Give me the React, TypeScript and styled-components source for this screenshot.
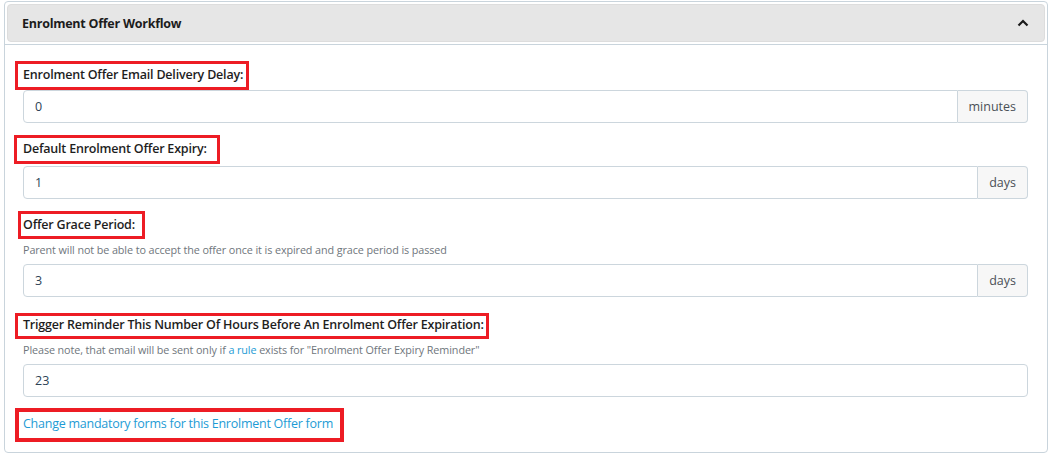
import styled, { createGlobalStyle } from 'styled-components'
import { FunctionComponent, ReactElement, ReactNode } from 'react'

const GlobalStyle = createGlobalStyle`
    body {
        margin: 0;
        background: #ffffff;
        font-family: 'Open Sans', 'Noto Sans', 'Liberation Sans', sans-serif;
        color: #212529;
    }
`

const Card = styled.section`
    width: 1042px;
    margin: 1px 0 0 4px;
    border: 1px solid #c9d4dc;
    border-radius: 4px;
`

const CardHead = styled.div`
    padding: 2px;
    border-bottom: 1px solid #c9d4dc;
`

const HeadBar = styled.div`
    height: 36px;
    display: flex;
    align-items: center;
    justify-content: space-between;
    padding: 0 15px 0 14px;
    background: #e6e6e6;
    border: 1px solid #dddddd;
    border-radius: 4px;
`

const Title = styled.h2`
    margin: 0;
    font-size: 12.5px;
    font-weight: 700;
    letter-spacing: -0.25px;
    color: #1c1c1c;
`

const Body = styled.div`
    display: flex;
    flex-direction: column;
    align-items: flex-start;
    padding: 16px 19px 10px 18px;
`

type HighlightProps = {
    $pad: string
    $shift: number
    $gap: number
    $width?: number
}

const Highlight = styled.div<HighlightProps>`
    display: inline-block;
    border: ${(p) => p.$width ?? 3}px solid #ed1c24;
    padding: ${(p) => p.$pad};
    margin-left: ${(p) => p.$shift}px;
    margin-bottom: ${(p) => p.$gap}px;
    font-size: 12.5px;
    line-height: 18px;
    font-weight: 600;
    letter-spacing: -0.2px;
    color: #1e1e1e;
`

const Help = styled.p`
    margin: 4px 0 7px 0;
    font-size: 10.8px;
    line-height: 14px;
    letter-spacing: -0.1px;
    color: #6f767c;
`

const Link = styled.a`
    color: #1d9bd5;
    text-decoration: none;
    cursor: pointer;
`

const FieldLink = styled(Link)`
    font-size: 12.5px;
    font-weight: 400;
    letter-spacing: -0.25px;
`

const InputGroup = styled.div<{ $gap: number }>`
    align-self: stretch;
    display: flex;
    height: 33px;
    margin-bottom: ${(p) => p.$gap}px;
`

const Input = styled.input<{ $joined: boolean }>`
    flex: 1;
    min-width: 0;
    box-sizing: border-box;
    height: 33px;
    padding: 0 11px;
    border: 1px solid #ccd6dd;
    border-radius: ${(p) => (p.$joined ? '4px 0 0 4px' : '4px')};
    font-family: inherit;
    font-size: 12.5px;
    color: #2d4255;
    background: #ffffff;
    outline: none;
`

const Addon = styled.span`
    display: flex;
    align-items: center;
    padding: 0 11px;
    border: 1px solid #ccd6dd;
    border-left: none;
    border-radius: 0 4px 4px 0;
    background: #f7f7f7;
    font-size: 12.5px;
    color: #4a5056;
`

const Chevron = () => (
    <svg width="12" height="8" viewBox="0 0 12 8">
        <polyline
            points="1.5,6.5 6,2 10.5,6.5"
            fill="none"
            stroke="#1a1a1a"
            strokeWidth="2.2"
        />
    </svg>
)

type FieldProps = {
    label: string
    pad: string
    shift: number
    labelGap: number
    help?: ReactNode
    value: string
    unit?: string
    gap: number
}

const Field: FunctionComponent<FieldProps> = ({
    label,
    pad,
    shift,
    labelGap,
    help,
    value,
    unit,
    gap,
}): ReactElement => (
    <>
        <Highlight $pad={pad} $shift={shift} $gap={help ? 0 : labelGap}>
            {label}
        </Highlight>
        {help && <Help>{help}</Help>}
        <InputGroup $gap={gap}>
            <Input $joined={!!unit} defaultValue={value} />
            {unit && <Addon>{unit}</Addon>}
        </InputGroup>
    </>
)

export default function App(): ReactElement {
    return (
        <>
            <GlobalStyle />
            <Card>
                <CardHead>
                    <HeadBar>
                        <Title>Enrolment Offer Workflow</Title>
                        <Chevron />
                    </HeadBar>
                </CardHead>
                <Body>
                    <Field
                        label="Enrolment Offer Email Delivery Delay:"
                        pad="2px 3px 3px 5px"
                        shift={-8}
                        labelGap={0}
                        value="0"
                        unit="minutes"
                        gap={12}
                    />
                    <Field
                        label="Default Enrolment Offer Expiry:"
                        pad="2px 10px 3px 6px"
                        shift={-9}
                        labelGap={2}
                        value="1"
                        unit="days"
                        gap={12}
                    />
                    <Field
                        label="Offer Grace Period:"
                        pad="2px 7px 2px 2px"
                        shift={-5}
                        labelGap={0}
                        help="Parent will not be able to accept the offer once it is expired and grace period is passed"
                        value="3"
                        unit="days"
                        gap={16}
                    />
                    <Field
                        label="Trigger Reminder This Number Of Hours Before An Enrolment Offer Expiration:"
                        pad="0 2px 2px 5px"
                        shift={-8}
                        labelGap={0}
                        help={
                            <>
                                Please note, that email will be sent only if{' '}
                                <Link>a rule</Link> exists for "Enrolment Offer
                                Expiry Reminder"
                            </>
                        }
                        value="23"
                        gap={11}
                    />
                    <Highlight $pad="3px 7px 5px 4px" $shift={-8} $gap={0} $width={4}>
                        <FieldLink>
                            Change mandatory forms for this Enrolment Offer form
                        </FieldLink>
                    </Highlight>
                </Body>
            </Card>
        </>
    )
}
